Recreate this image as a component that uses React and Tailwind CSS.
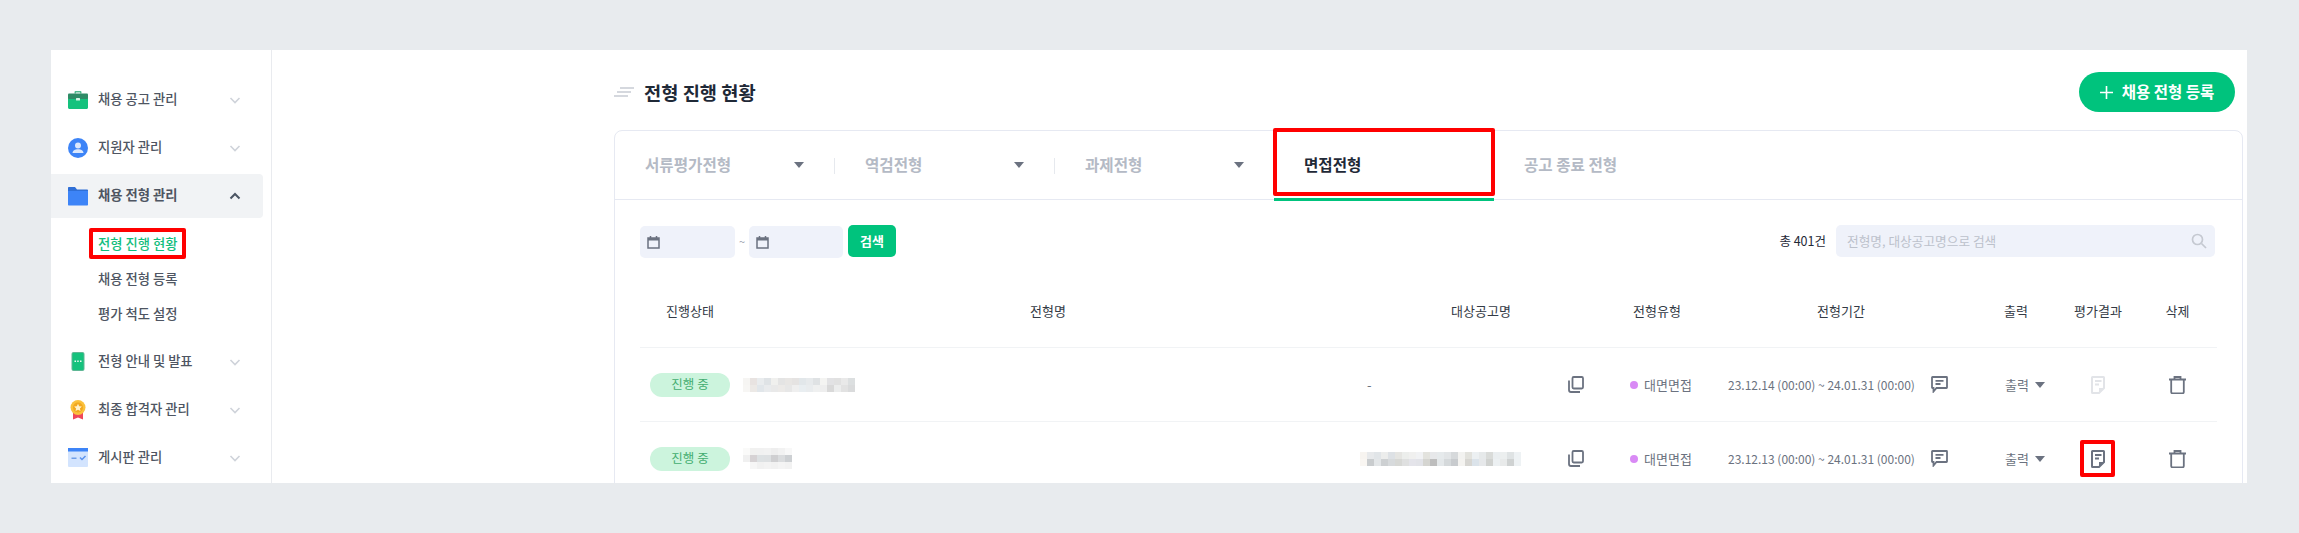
import React from 'react';

const FONT = 'font-["Noto_Sans_CJK_KR","Noto_Sans",sans-serif]';

function Chevron({ up, active }) {
  return (
    <svg width="14" height="14" viewBox="0 0 14 14" fill="none" stroke={active ? '#4b5563' : '#cfd3da'} strokeWidth={active ? 2 : 1.6}>
      <path d={up ? 'M2.5 9.5 7 5l4.5 4.5' : 'M2.5 5 7 9.5 11.5 5'} />
    </svg>
  );
}

const Briefcase = () => (
  <svg width="20" height="20" viewBox="0 0 20 20">
    <path d="M6.5 3.5V2.2C6.5 1.5 7 1 7.7 1h4.6c.7 0 1.2.5 1.2 1.2v1.3H12V2.500H8v1z" fill="#4fb98e" />
    <rect x="0" y="3.5" width="20" height="6" rx="1" fill="#2e8b66" />
    <path d="M0 9h20v8.500c0 .8-.7 1.500-1.500 1.500h-17C.7 19 0 18.300 0 17.500z" fill="#15c27d" />
    <rect x="8" y="8" width="4" height="2.5" rx=".5" fill="#d6f5e6" />
  </svg>
);

const Person = () => (
  <svg width="20" height="20" viewBox="0 0 20 20">
    <circle cx="10" cy="10" r="10" fill="#3d84f7" />
    <circle cx="10" cy="7.5" r="3" fill="#dbe8fd" />
    <path d="M4.500 15c0-2.500 2.500-3.800 5.500-3.800s5.500 1.300 5.500 3.800z" fill="#dbe8fd" />
  </svg>
);

const Folder = () => (
  <svg width="20" height="20" viewBox="0 0 20 20">
    <path d="M0 2c0-.6.4-1 1-1h6l2 2.500h10c.6 0 1 .4 1 1V7H0z" fill="#2f6fd6" />
    <path d="M0 5h20v13.500c0 .6-.4 1-1 1H1c-.6 0-1-.4-1-1z" fill="#3d84f7" />
  </svg>
);

const Phone = () => (
  <svg width="20" height="20" viewBox="0 0 20 20">
    <rect x="3.5" y="0" width="13" height="19" rx="2" fill="#5fb795" />
    <rect x="4.5" y="1" width="11" height="17" rx="1" fill="#15c27d" />
    <rect x="6.5" y="8.5" width="1.5" height="1.5" fill="#eafbf3" />
    <rect x="9.2" y="8.5" width="1.5" height="1.5" fill="#eafbf3" />
    <rect x="12" y="8.5" width="1.5" height="1.5" fill="#eafbf3" />
  </svg>
);

const Medal = () => (
  <svg width="20" height="20" viewBox="0 0 20 20">
    <path d="M5 12h10v7.500l-5-2-5 2z" fill="#f0475a" />
    <circle cx="10" cy="7.5" r="7.5" fill="#fac13c" />
    <circle cx="10" cy="7.5" r="5" fill="#f2a81f" />
    <path d="m10 3.800 1.200 2.500 2.700.3-2 1.800.6 2.700-2.500-1.400-2.500 1.400.6-2.700-2-1.800 2.700-.3z" fill="#fff1c9" />
  </svg>
);

const Board = () => (
  <svg width="20" height="20" viewBox="0 0 20 20">
    <rect x="0" y="1" width="20" height="18" rx="1" fill="#d3e4fe" />
    <rect x="0" y="0" width="20" height="3.5" fill="#3d84f7" />
    <rect x="3.5" y="9.5" width="5" height="1.5" fill="#6f9ee8" />
    <path d="m12 9.500 2 2 3.500-3.500" fill="none" stroke="#5a93ee" strokeWidth="1.5" />
  </svg>
);

function Caret({ color = '#6b7280' }) {
  return (
    <svg width="10" height="6" viewBox="0 0 10 6">
      <path d="M0 0h10L5 6z" fill={color} />
    </svg>
  );
}

function CalendarIcon() {
  return (
    <svg width="13" height="13" viewBox="0 0 13 13" fill="none">
      <path d="M3.500 0v3M9.500 0v3" stroke="#6b7280" strokeWidth="1.5" />
      <rect x="1" y="2" width="11" height="10" fill="none" stroke="#6b7280" strokeWidth="1.5" />
      <rect x="1" y="2" width="11" height="2.5" fill="#6b7280" />
    </svg>
  );
}

function CopyIcon() {
  return (
    <svg width="16" height="17" viewBox="0 0 16 17" fill="none" stroke="#6b7280" strokeWidth="1.8">
      <rect x="4.5" y="1" width="10.5" height="11.5" rx="1.2" />
      <path d="M1 4.500v9.500c0 1.200.8 2 2 2h9" />
    </svg>
  );
}

function CommentIcon() {
  return (
    <svg width="17" height="17" viewBox="0 0 17 17" fill="none">
      <path d="M1.500 1h14c.3 0 .5.2.5.500v10c0 .3-.2.500-.5.500H5.500L2.500 15.500V12h-1a.5.5 0 0 1-.5-.5v-10c0-.3.2-.5.500-.5z" stroke="#6b7280" strokeWidth="1.8" />
      <path d="M4.500 4.800h8M4.500 8h5" stroke="#6b7280" strokeWidth="1.8" />
    </svg>
  );
}

function ResultIcon({ color }) {
  return (
    <svg width="14" height="18" viewBox="0 0 14 18" fill="none">
      <path d="M1.500 1h11c.3 0 .5.2.5.500V12l-5 5H1.500a.5.5 0 0 1-.5-.5v-15c0-.3.2-.5.500-.5z" stroke={color} strokeWidth="2" />
      <path d="M4 5h6.500M4 8.500h4" stroke={color} strokeWidth="1.8" />
      <path d="M8 17v-5h5z" fill={color} />
    </svg>
  );
}

function TrashIcon() {
  return (
    <svg width="17" height="18" viewBox="0 0 17 18" fill="none" stroke="#6b7280" strokeWidth="1.8">
      <path d="M0 3.500h17M5.500 3.500V1h6v2.500" />
      <path d="M2.200 3.500v12.500c0 .8.6 1.300 1.300 1.300h10c.7 0 1.300-.5 1.300-1.300V3.500" />
    </svg>
  );
}

function RedBox({ className }) {
  return <span className={`absolute border-[4px] border-[#ff0000] rounded-[2px] pointer-events-none ${className}`} />;
}

// mosaic stands in for the pixelated names in the screenshot
function Mosaic({ rows, cell = 7 }) {
  return (
    <div className="flex flex-col">
      {rows.map((row, i) => (
        <div key={i} className="flex">
          {row.map((c, j) => (
            <span key={j} style={{ width: cell, height: cell, background: c }} />
          ))}
        </div>
      ))}
    </div>
  );
}

const blurA = [
  ['#f6f5f3', '#e8e3e1', '#e9ecee', '#dfe3e6', '#f0f0ee', '#e4e4e4', '#e8e6e4', '#e5e3e2', '#e2e7ea', '#e7eaec', '#dfe2e4', '#f4f4f2', '#e2e2e4', '#e1e1e1', '#e9e9e9', '#dcdfe0'],
  ['#f7f6f4', '#ece9e6', '#e1e6ea', '#e9ebed', '#e9e9e9', '#eceae8', '#e7e7e7', '#efefef', '#e9eef1', '#e9ecee', '#eff0f0', '#eeeeee', '#d9d9d9', '#eceded', '#e2e2e2', '#dadbdc'],
];
const blurB = [
  ['#fafaf9', '#f1f1f0', '#f1f1f1', '#f2f2f2', '#eeeeee', '#f2f2f2', '#f8f8f8'],
  ['#f0f0f0', '#d6d2d4', '#dde1e3', '#dde0e2', '#cfcfd1', '#dadcde', '#cdd0d3'],
  ['#ffffff', '#f6f6f6', '#f1f1f1', '#f3f3f3', '#f1f1f1', '#f4f4f4', '#f2f2f2'],
];
const blurC = [
  ['#f7f4f0', '#e7e9eb', '#e1e5e8', '#ecedec', '#dde1e5', '#e5e5e2', '#eceeec', '#f0f0ef', '#f1f2f4', '#e3e3de', '#e7e8ea', '#e6eaec', '#e2e5e7', '#d6d9db', '#f2f2f0', '#e2e2dd', '#ecf0f2', '#e6e9ea', '#d9dbd9', '#eaeef0', '#ecefef', '#dfe3e4', '#eef2f4'],
  ['#f9f6f2', '#c9ccce', '#e3e6e8', '#cdd0d2', '#d7dadc', '#d7d8d5', '#dfe0e0', '#e4e4ea', '#e2e3e8', '#d5d5d1', '#bdbdbd', '#e4e8ea', '#d5d9db', '#c8cbce', '#f4f3f0', '#d7d6d2', '#dbe3ea', '#e6e8ea', '#d0d2d0', '#ecf0f2', '#e8eaea', '#cfd2d2', '#eef2f4'],
];

const menu = [
  { label: '채용 공고 관리', icon: <Briefcase /> },
  { label: '지원자 관리', icon: <Person /> },
  { label: '채용 전형 관리', icon: <Folder />, active: true, subs: ['전형 진행 현황', '채용 전형 등록', '평가 척도 설정'] },
  { label: '전형 안내 및 발표', icon: <Phone /> },
  { label: '최종 합격자 관리', icon: <Medal /> },
  { label: '게시판 관리', icon: <Board /> },
];

function Sidebar() {
  return (
    <aside className="w-[221px] shrink-0 border-r border-[#e9ebef] pt-[26px] pr-[8px]">
      {menu.map((m) => (
        <div key={m.label}>
          <div className={m.active ? 'py-[2px]' : ''}>
            <div className={`flex items-center pl-[17px] pr-[21px] rounded-r-[4px] ${m.active ? 'h-[44px] bg-[#f1f3f5]' : 'h-[48px]'}`}>
              <span className="w-[20px] h-[20px] shrink-0">{m.icon}</span>
              <span className={`ml-[10px] flex-1 text-[13.3px] text-[#4e5562] -translate-y-px ${m.active ? 'font-bold' : 'font-medium'}`}>{m.label}</span>
              <Chevron up={m.active} active={m.active} />
            </div>
          </div>
          {m.subs && (
            <div className="mb-[7px] pt-[6px]">
              {m.subs.map((s, i) => (
                <div key={s} className="h-[35px] pl-[47px] flex items-center">
                  <span className={`relative text-[13.3px] font-medium ${i === 0 ? 'text-[#12bd7c]' : 'text-[#4e5562]'}`}>
                    {s}
                    {i === 0 && <RedBox className="-left-[9px] -right-[9px] -top-[6px] -bottom-[6px]" />}
                  </span>
                </div>
              ))}
            </div>
          )}
        </div>
      ))}
    </aside>
  );
}

const tabs = ['서류평가전형', '역검전형', '과제전형'];

function Tabs() {
  return (
    <div className="flex h-[69px] border-b border-[#e6e9f2]">
      {tabs.map((t) => (
        <div key={t} className="w-[220px] h-full flex items-center pl-[30px] pr-[31px] justify-between relative">
          <span className="text-[15.6px] font-bold text-[#b4bac5]">{t}</span>
          <Caret />
          <span className="absolute right-0 top-[27px] h-[16px] w-px bg-[#e6e9ee]" />
        </div>
      ))}
      <div className="relative w-[220px] h-[70px] -ml-px flex items-center pl-[30px] border-b-[3px] border-[#00c37d]">
        <span className="text-[15.6px] font-bold text-[#1f2937]">면접전형</span>
        <RedBox className="-left-px -right-px -top-[3px] bottom-[2px]" />
      </div>
      <div className="flex items-center pl-[30px]">
        <span className="text-[15.6px] font-bold text-[#b4bac5]">공고 종료 전형</span>
      </div>
    </div>
  );
}

function Filters() {
  return (
    <div className="flex items-start justify-between h-[32px] pr-[2px]">
      <div className="flex items-start">
        <div className="w-[95px] h-[32px] mt-px bg-[#eff2fa] rounded-[5px] flex items-center pl-[7px]"><CalendarIcon /></div>
        <span className="w-[14px] leading-[32px] text-center text-[11px] text-[#9ca3af]">~</span>
        <div className="w-[94px] h-[32px] mt-px bg-[#eff2fa] rounded-[5px] flex items-center pl-[7px]"><CalendarIcon /></div>
        <button className="ml-[5px] w-[48px] h-[32px] bg-[#00c37d] rounded-[5px] text-white text-[13px] font-bold">검색</button>
      </div>
      <div className="flex items-center">
        <span className="text-[12.5px] text-[#1f2937] mr-[10px]">총 401건</span>
        <div className="w-[379px] h-[32px] bg-[#eff2fa] rounded-[5px] flex items-center justify-between pl-[11px] pr-[8px]">
          <span className="text-[12.7px] text-[#bcc1cb]">전형명, 대상공고명으로 검색</span>
          <svg width="16" height="16" viewBox="0 0 16 16" fill="none" stroke="#c5c9d1" strokeWidth="1.7">
            <circle cx="6.5" cy="6.5" r="5" />
            <path d="m10.500 10.500 4.500 4.500" />
          </svg>
        </div>
      </div>
    </div>
  );
}

const colClass = 'grid grid-cols-[100px_616px_250px_102px_266px_84px_80px_79px]';
const heads = ['진행상태', '전형명', '대상공고명', '전형유형', '전형기간', '출력', '평가결과', '삭제'];

function Row({ blur, target, period, faded, boxed }) {
  return (
    <div className={`${colClass} h-[74px] items-center border-b border-[#f1f3f5] text-[13px] text-[#6b7280]`}>
      <div className="flex justify-center">
        <span className="w-[80px] h-[24px] rounded-full bg-[#ccf4dd] text-[#43ad70] text-[12.5px] flex items-center justify-center">진행 중</span>
      </div>
      <div className="pl-[3px]">{blur}</div>
      <div className="flex items-center justify-between pl-[4px] pr-[22px]">
        {target}
        <CopyIcon />
      </div>
      <div className="flex items-center pl-[24px]">
        <span className="w-[8px] h-[8px] rounded-full bg-[#d98af5] mr-[6px]" />
        대면면접
      </div>
      <div className="flex items-center pl-[20px]">
        <span className="w-[203px] text-[12px] whitespace-nowrap">{period}</span>
        <CommentIcon />
      </div>
      <div className="flex items-center pl-[31px]">
        출력
        <span className="ml-[6px]"><Caret /></span>
      </div>
      <div className="flex justify-center">
        <span className="relative flex">
          <ResultIcon color={faded ? '#e2e4e8' : '#6b7280'} />
          {boxed && <RedBox className="-left-[11px] -right-[10px] -top-[10px] -bottom-[9px]" />}
        </span>
      </div>
      <div className="flex justify-center"><TrashIcon /></div>
    </div>
  );
}

export default function App() {
  return (
    <div className={`${FONT} h-[533px] bg-[#e8ebee] pt-[50px] pl-[51px] pr-[52px] overflow-hidden`}>
      <div className="flex h-[433px] bg-white overflow-hidden">
        <Sidebar />
        <main className="flex-1 min-w-0 pl-[342px] pr-[4px]">
          <div className="h-[80px] flex items-center justify-between pt-[4px] pr-[8px]">
            <div className="flex items-center">
              <svg width="20" height="10" viewBox="0 0 20 10" fill="none" stroke="#c8ccd3" strokeWidth="1.4">
                <path d="M6 1h14M3 5h14M0 9h14" />
              </svg>
              <h1 className="ml-[10px] text-[18.7px] font-bold text-[#1f2937]">전형 진행 현황</h1>
            </div>
            <button className="w-[156px] h-[40px] rounded-full bg-[#00c37d] text-white text-[15.5px] font-bold flex items-center justify-center">
              <svg width="13" height="13" viewBox="0 0 13 13" className="mr-[9px]" fill="none" stroke="#fff" strokeWidth="1.6">
                <path d="M6.500 0v13M0 6.500h13" />
              </svg>
              채용 전형 등록
            </button>
          </div>
          <section className="border border-[#e6e9f2] rounded-t-[8px] h-[400px]">
            <Tabs />
            <div className="px-[25px] pt-[25px]">
              <Filters />
              <div className={`${colClass} h-[91px] pt-[18px] items-center border-b border-[#f1f3f5] text-[13px] text-[#333a45]`}>
                {heads.map((h) => (
                  <div key={h} className="text-center">{h}</div>
                ))}
              </div>
              <Row blur={<Mosaic rows={blurA} />} target={<span className="pl-[7px]">-</span>} period="23.12.14 (00:00) ~ 24.01.31 (00:00)" faded />
              <Row blur={<Mosaic rows={blurB} />} target={<Mosaic rows={blurC} />} period="23.12.13 (00:00) ~ 24.01.31 (00:00)" boxed />
            </div>
          </section>
        </main>
      </div>
    </div>
  );
}
